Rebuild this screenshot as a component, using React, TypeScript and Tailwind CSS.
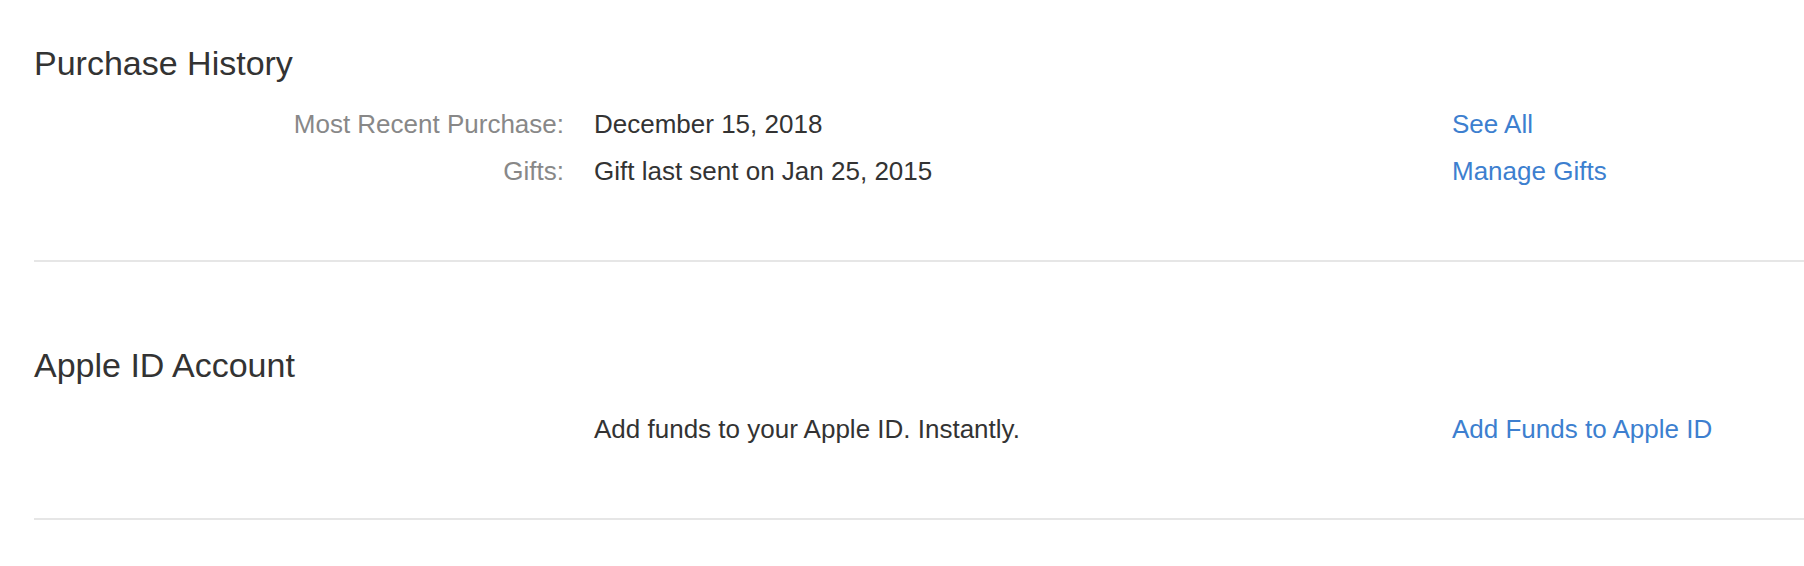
import React from 'react';

interface Row {
    label?: string;
    value: string;
    link: string;
}

interface Section {
    title: string;
    rows: Row[];
    top: string;
    body: string;
}

const sections: Section[] = [
    {
        title: 'Purchase History',
        rows: [
            { label: 'Most Recent Purchase:', value: 'December 15, 2018', link: 'See All' },
            { label: 'Gifts:', value: 'Gift last sent on Jan 25, 2015', link: 'Manage Gifts' },
        ],
        top: 'pt-[43px]',
        body: 'mt-[18px] pb-[65px]',
    },
    {
        title: 'Apple ID Account',
        rows: [{ value: 'Add funds to your Apple ID. Instantly.', link: 'Add Funds to Apple ID' }],
        top: 'pt-[83px]',
        body: 'mt-[21px] pb-[65px]',
    },
];

const App: React.FC = () => {
    return (
        <div className="min-h-[566px] w-full bg-white pl-[34px] font-['Liberation_Sans',Arial,sans-serif] antialiased">
            {sections.map((section) => (
                <section key={section.title} className={`${section.top} border-b-2 border-[#e6e6e6]`}>
                    <h2 className="text-[34px] leading-[40px] text-[#333333]">{section.title}</h2>
                    <div className={section.body}>
                        {section.rows.map((row) => (
                            <div
                                key={row.link}
                                className="grid grid-cols-[530px_1fr_352px] gap-x-[30px] text-[26px] leading-[47px]"
                            >
                                <span className="text-right text-[#888888]">{row.label}</span>
                                <span className="text-[#333333]">{row.value}</span>
                                <a href="#" className="text-[#3d7fcf]">
                                    {row.link}
                                </a>
                            </div>
                        ))}
                    </div>
                </section>
            ))}
        </div>
    );
};

export default App;
